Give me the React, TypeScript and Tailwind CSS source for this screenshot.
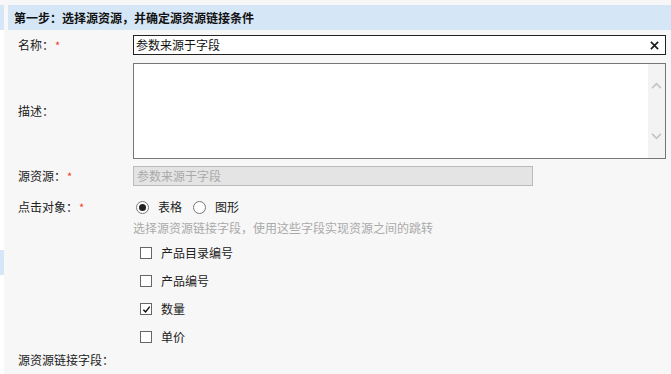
import { useState } from "react";

const font = { fontFamily: '"Noto Sans CJK SC", "Liberation Sans", sans-serif' };

function Label({ text, required }: { text: string; required?: boolean }) {
  return (
    <div className="w-[125px] shrink-0 pl-[10px] flex items-center text-[12px] text-[#222]">
      <span>{text}</span>
      {required && <span className="ml-[1px] text-[#f03a1e] text-[11px] leading-none">*</span>}
    </div>
  );
}

function Check({ label, checked, onToggle }: { label: string; checked: boolean; onToggle: () => void }) {
  return (
    <div className="h-[28px] flex items-center pl-[7px] cursor-pointer" onClick={onToggle}>
      <span className="w-[12px] h-[12px] border border-[#666] bg-white flex items-center justify-center">
        {checked && (
          <svg viewBox="0 0 10 10" className="w-[9px] h-[9px]">
            <path d="M1.5 5.2 L4 7.6 L8.6 1.8" fill="none" stroke="#111" strokeWidth="1.6" />
          </svg>
        )}
      </span>
      <span className="ml-[9px] text-[12px] text-[#222]">{label}</span>
    </div>
  );
}

export default function App() {
  const [name, setName] = useState("参数来源于字段");
  const [target, setTarget] = useState("table");
  const [fields, setFields] = useState([
    { label: "产品目录编号", checked: false },
    { label: "产品编号", checked: false },
    { label: "数量", checked: true },
    { label: "单价", checked: false },
  ]);

  return (
    <div className="w-[671px] h-[374px] bg-[#f7f7f7] flex flex-col overflow-hidden" style={font}>
      <div className="h-[5px] shrink-0" />
      <div className="flex flex-1">
        <div className="w-[4px] shrink-0 bg-white flex flex-col">
          <div className="h-[25px] bg-[#d5e6f6]" />
          <div className="h-[220px]" />
          <div className="h-[25px] bg-[#d5e6f6]" />
        </div>
        <div className="flex-1 flex flex-col pl-[4px]">
          <div className="h-[25px] bg-[#d5e6f6] flex items-center pl-[6px] text-[12px] font-bold text-[#111]">
            第一步：选择源资源，并确定源资源链接条件
          </div>

          <div className="flex mt-[5px] h-[20px]">
            <Label text="名称：" required />
            <div className="w-[533px] h-[20px] border-[1.5px] border-[#222] bg-white flex items-center pl-[2px] pr-[6px]">
              <input
                value={name}
                onChange={(e) => setName(e.target.value)}
                className="flex-1 text-[12px] text-[#111] outline-none bg-transparent"
              />
              <svg viewBox="0 0 10 10" className="w-[9px] h-[9px]" onClick={() => setName("")}>
                <path d="M1 1 L9 9 M9 1 L1 9" stroke="#1a1a1a" strokeWidth="1.8" />
              </svg>
            </div>
          </div>

          <div className="flex mt-[8px] h-[96px]">
            <Label text="描述：" />
            <div className="w-[533px] h-[96px] border border-[#777] bg-white flex">
              <textarea className="flex-1 resize-none outline-none text-[12px] p-[2px]" />
              <div className="w-[17px] bg-[#f3f3f3] flex flex-col items-center justify-between py-[18px]">
                <svg viewBox="0 0 12 8" className="w-[11px] h-[7px]">
                  <path d="M1 7 L6 2 L11 7" fill="none" stroke="#c4c4c4" strokeWidth="2" />
                </svg>
                <svg viewBox="0 0 12 8" className="w-[11px] h-[7px]">
                  <path d="M1 1 L6 6 L11 1" fill="none" stroke="#c4c4c4" strokeWidth="2" />
                </svg>
              </div>
            </div>
          </div>

          <div className="flex mt-[7px] h-[20px]">
            <Label text="源资源：" required />
            <div className="w-[400px] h-[20px] border border-[#bbb] bg-[#e4e4e4] flex items-center pl-[3px] text-[12px] text-[#aaa]">
              参数来源于字段
            </div>
          </div>

          <div className="flex mt-[11px] h-[20px]">
            <Label text="点击对象：" required />
            <div className="flex items-center text-[12px] text-[#222]">
              <span
                className="ml-[3px] w-[13px] h-[13px] rounded-full border border-[#777] bg-white flex items-center justify-center"
                onClick={() => setTarget("table")}
              >
                {target === "table" && <span className="w-[7px] h-[7px] rounded-full bg-[#222]" />}
              </span>
              <span className="ml-[9px]">表格</span>
              <span
                className="ml-[11px] w-[13px] h-[13px] rounded-full border border-[#777] bg-white flex items-center justify-center"
                onClick={() => setTarget("chart")}
              >
                {target === "chart" && <span className="w-[7px] h-[7px] rounded-full bg-[#222]" />}
              </span>
              <span className="ml-[9px]">图形</span>
            </div>
          </div>

          <div className="flex mt-[1px] h-[20px]">
            <div className="w-[125px] shrink-0" />
            <div className="flex items-center text-[12px] text-[#aaa]">
              选择源资源链接字段，使用这些字段实现资源之间的跳转
            </div>
          </div>

          <div className="flex mt-[1px]">
            <div className="w-[125px] shrink-0" />
            <div className="flex flex-col">
              {fields.map((f, i) => (
                <Check
                  key={f.label}
                  label={f.label}
                  checked={f.checked}
                  onToggle={() =>
                    setFields(fields.map((x, j) => (j === i ? { ...x, checked: !x.checked } : x)))
                  }
                />
              ))}
            </div>
          </div>

          <div className="flex h-[20px] mt-[-1px]">
            <Label text="源资源链接字段：" />
          </div>
        </div>
      </div>
    </div>
  );
}
